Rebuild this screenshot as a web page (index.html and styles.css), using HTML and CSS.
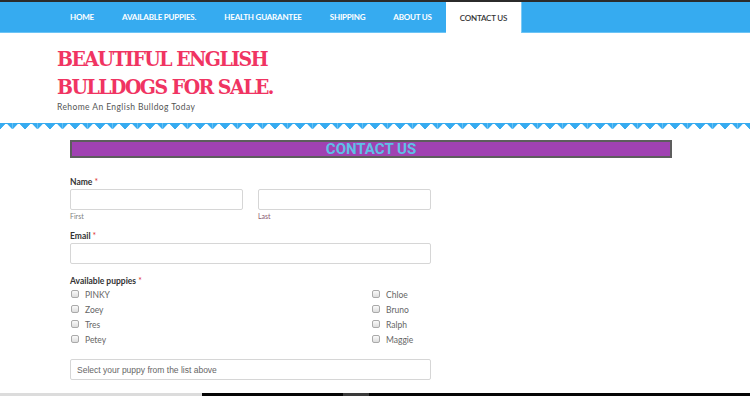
FILE: index.html
```html
<!DOCTYPE html>
<html>
<head>
<meta charset="utf-8">
<link rel="stylesheet" href="styles.css">
</head>
<body>
<div class="topline"></div>
<nav class="nav">
  <ul class="menu">
    <li class="item">HOME</li>
    <li class="item">AVAILABLE PUPPIES.</li>
    <li class="item">HEALTH GUARANTEE</li>
    <li class="item">SHIPPING</li>
    <li class="item">ABOUT US</li>
    <li class="item active">CONTACT US</li>
  </ul>
</nav>
<header class="header">
  <h1 class="title">BEAUTIFUL ENGLISH<br>BULLDOGS FOR SALE.</h1>
  <p class="tagline">Rehome An English Bulldog Today</p>
</header>
<div class="zigzag"></div>
<main class="content">
  <h2 class="banner">CONTACT US</h2>
  <form class="form">
    <div class="field">
      <div class="label">Name <span class="req">*</span></div>
      <div class="name-row">
        <div class="sub">
          <div class="input"></div>
          <div class="hint">First</div>
        </div>
        <div class="sub">
          <div class="input"></div>
          <div class="hint last">Last</div>
        </div>
      </div>
    </div>
    <div class="field">
      <div class="label">Email <span class="req">*</span></div>
      <div class="input wide"></div>
    </div>
    <div class="field puppies">
      <div class="label">Available puppies <span class="req">*</span></div>
      <div class="checks">
        <div class="col">
          <div class="check"><span class="box"></span>PINKY</div>
          <div class="check"><span class="box"></span>Zoey</div>
          <div class="check"><span class="box"></span>Tres</div>
          <div class="check"><span class="box"></span>Petey</div>
        </div>
        <div class="col">
          <div class="check"><span class="box"></span>Chloe</div>
          <div class="check"><span class="box"></span>Bruno</div>
          <div class="check"><span class="box"></span>Ralph</div>
          <div class="check"><span class="box"></span>Maggie</div>
        </div>
      </div>
    </div>
    <div class="input wide select">Select your puppy from the list above</div>
    <div class="label cut">Comments or questions <span class="req">*</span></div>
  </form>
</main>
<div class="bottombar"><span class="seg-light"></span><span class="seg-dark"></span><span class="seg-grey"></span><span class="seg-dark2"></span></div>
</body>
</html>
```
FILE: styles.css
```css
html, body { margin: 0; padding: 0; }
body {
  width: 750px;
  height: 396px;
  overflow: hidden;
  background: #fff;
  font-family: Lato, "Open Sans", sans-serif;
  color: #333;
  position: relative;
}
.topline { height: 2px; background: #2b2b2b; }
.nav {
  height: 30px;
  background: #36abf0;
  border-bottom: 1px solid #6cc4f6;
}
.menu {
  list-style: none;
  margin: 0;
  padding: 0 0 0 56px;
  display: flex;
  height: 100%;
}
.item {
  color: #fff;
  font-family: Lato, sans-serif;
  font-size: 8px;
  font-weight: bold;
  letter-spacing: -0.2px;
  padding: 0 14px;
  display: flex;
  align-items: center;
}
.item.active {
  background: #fff;
  color: #333;
  height: 31px;
  font-weight: 600;
  border-right: 1px solid #7ccaf6;
}
.header {
  height: 90px;
  padding-left: 57px;
  box-sizing: border-box;
  padding-top: 12px;
}
.title {
  margin: 0;
  font-family: "DejaVu Serif", serif;
  font-stretch: condensed;
  font-weight: bold;
  font-size: 21px;
  line-height: 28px;
  color: #f03462;
  letter-spacing: -1.5px;
}
.tagline {
  margin: 1px 0 0;
  font-size: 8.5px;
  color: #555;
  letter-spacing: 0.4px;
}
.zigzag {
  height: 8px;
  background:
    linear-gradient(135deg, #36abf0 33%, transparent 33%) 0 0 / 12.5px 8px repeat-x,
    linear-gradient(225deg, #36abf0 33%, transparent 33%) 0 0 / 12.5px 8px repeat-x;
}
.content { padding: 9px 0 0 70px; width: 602px; }
.banner {
  margin: 0;
  height: 18px;
  box-sizing: border-box;
  border: 2px solid #5d5d5d;
  background: #a042b2;
  color: #5ec0e6;
  font-family: Roboto, "Liberation Sans", sans-serif;
  font-weight: bold;
  font-size: 15px;
  line-height: 15px;
  text-align: center;
}
.form { width: 361px; padding-top: 18px; }
.field { margin-bottom: 10px; }
.field.puppies { margin-top: 11px; margin-bottom: 12px; }
.label {
  font-size: 8.5px;
  font-weight: bold;
  color: #333;
  line-height: 12px;
  margin-bottom: 1px;
}
.req { color: #d33; font-weight: normal; }
.name-row { display: flex; gap: 15px; }
.sub { flex: 1; }
.input {
  height: 21px;
  box-sizing: border-box;
  border: 1px solid #d6d6d6;
  border-radius: 2px;
  background: #fff;
}
.hint { font-size: 7px; color: #808080; margin-top: 2px; line-height: 8px; }
.hint.last { color: #8a5a70; }
.checks { display: flex; margin-top: -1px; }
.col { width: 301px; }
.col + .col { width: auto; }
.check {
  display: flex;
  align-items: center;
  height: 15px;
  font-size: 8.5px;
  color: #666;
}
.box {
  width: 6px;
  height: 6px;
  border: 1px solid #aaa;
  border-radius: 2px;
  background: linear-gradient(#fafafa, #ddd);
  margin: 0 6px 0 1px;
  position: relative;
  top: -1px;
}
.select {
  font-family: "Liberation Sans", Arial, sans-serif;
  font-size: 8.5px;
  color: #666;
  padding: 0 6px;
  display: flex;
  align-items: center;
}
.cut { margin-top: 11px; }
.bottombar {
  position: absolute;
  left: 0;
  right: 0;
  bottom: 0;
  height: 3px;
  display: flex;
}
.seg-light { width: 202px; background: #dcdcdc; }
.seg-dark { width: 141px; background: #050505; }
.seg-grey { width: 26px; background: #3a3a3a; }
.seg-dark2 { flex: 1; background: #050505; }
```
